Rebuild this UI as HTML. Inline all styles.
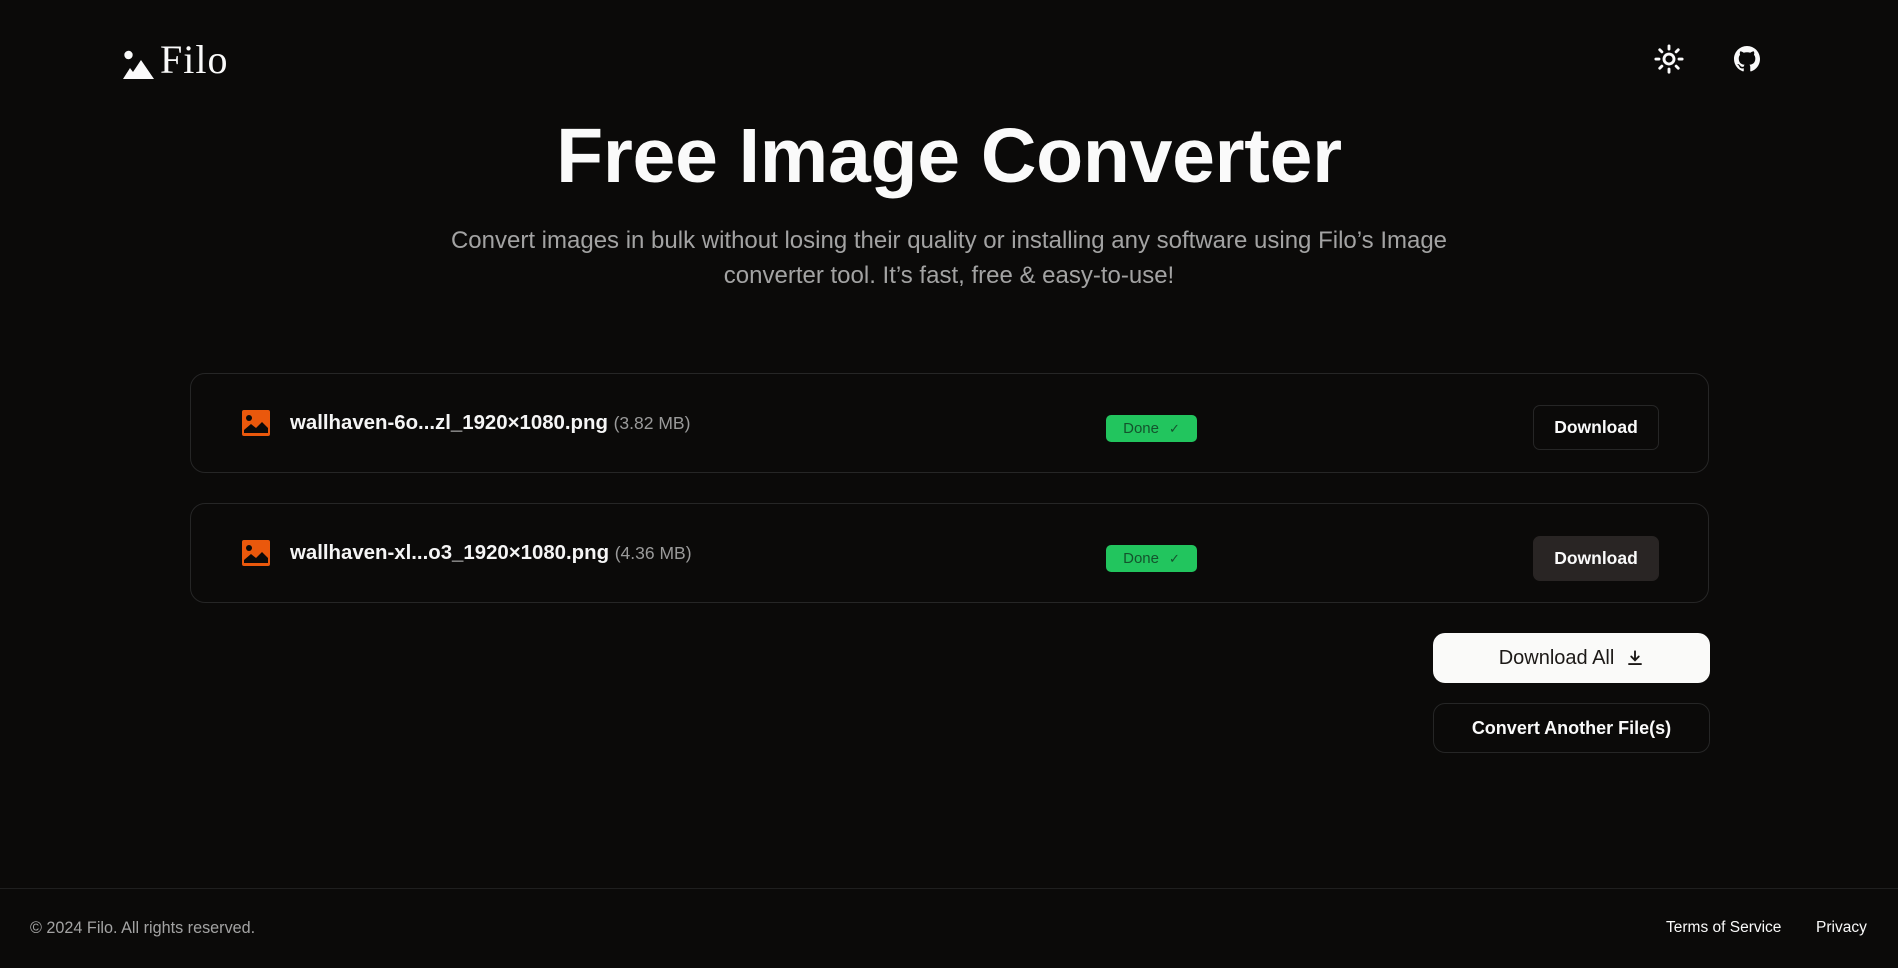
<!DOCTYPE html>
<html><head><meta charset="utf-8"><style>
*{box-sizing:border-box;margin:0;padding:0}
body{width:1898px;height:968px;background:#0b0a09;color:#fafafa;font-family:"Liberation Sans",sans-serif;position:relative;overflow:hidden}
.abs{position:absolute}
.logo{left:123px;top:40px;display:flex;align-items:flex-end}
.logo span{font-family:"Liberation Serif",serif;font-size:40px;line-height:40px;margin-left:6px;color:#fafafa;letter-spacing:1px}
h1{position:absolute;top:112px;left:0;width:1898px;text-align:center;font-size:77px;font-weight:700;letter-spacing:-0.3px}
.sub{top:223px;left:0;width:1898px;text-align:center;font-size:24px;line-height:35px;color:#a3a3a3}
.card{left:190px;width:1519px;height:100px;border:1px solid #262626;border-radius:15px}
.fi{left:241px;width:30px;height:28px}
.fn{left:290px;font-size:20.4px;font-weight:700;color:#f5f5f5}
.fn small{font-weight:400;color:#9a9a9a;font-size:17.5px}
.badge{left:1106px;width:91px;height:27px;background:#22c55e;border-radius:5px;color:#14532d;font-size:15px;display:flex;align-items:center;justify-content:center;gap:10px}
.dl{left:1533px;width:126px;height:45px;border:1px solid #262626;border-radius:7px;font-size:17.5px;font-weight:700;display:flex;align-items:center;justify-content:center}
.big{left:1433px;width:277px;height:50px;border-radius:12px;font-size:20px;display:flex;align-items:center;justify-content:center;gap:12px}
.foot{top:888px;left:0;width:1898px;border-top:1px solid #1f1f1f}
.ft{top:919px;font-size:15.5px}
</style></head><body>
<div class="abs logo">
<svg width="31" height="30" viewBox="0 0 31 30"><circle cx="5.5" cy="5" r="4.2" fill="#fafafa"/><path d="M0 29 L7 18 L10 22 L18 10 L31 29 Z" fill="#fafafa"/></svg>
<span>Filo</span></div>
<svg class="abs" style="left:1654px;top:44px" width="30" height="30" viewBox="0 0 24 24" fill="none" stroke="#fafafa" stroke-width="2.3" stroke-linecap="round"><circle cx="12" cy="12" r="4"/><path d="M12 1.5v2.5M12 20v2.5M4.6 4.6l1.7 1.7M17.7 17.7l1.7 1.7M1.5 12h2.5M20 12h2.5M4.6 19.4l1.7-1.7M17.7 6.3l1.7-1.7"/></svg>
<svg class="abs" style="left:1734px;top:46px" width="26" height="26" viewBox="0 0 16 16"><path fill="#fafafa" d="M8 0C3.58 0 0 3.58 0 8c0 3.540 2.29 6.53 5.47 7.59.4.07.55-.17.55-.38 0-.19-.01-.82-.01-1.49-2.01.37-2.53-.49-2.69-.94-.09-.23-.48-.94-.82-1.130-.28-.15-.68-.52-.01-.53.63-.01 1.08.58 1.23.82.72 1.21 1.87.87 2.33.66.07-.52.28-.87.51-1.07-1.78-.2-3.64-.89-3.64-3.95 0-.87.31-1.59.82-2.15-.08-.2-.36-1.02.08-2.12 0 0 .67-.21 2.2.82.64-.18 1.32-.27 2-.27.68 0 1.36.09 2 .27 1.53-1.04 2.2-.82 2.2-.82.44 1.1.16 1.92.08 2.12.51.56.82 1.27.82 2.15 0 3.07-1.870 3.75-3.65 3.95.29.25.54.73.54 1.48 0 1.07-.01 1.93-.01 2.2 0 .21.15.46.55.38A8.013 8.013 0 0016 8c0-4.42-3.58-8-8-8z"/></svg>
<h1>Free Image Converter</h1>
<div class="abs sub">Convert images in bulk without losing their quality or installing any software using Filo’s Image<br>converter tool. It’s fast, free &amp; easy-to-use!</div>

<div class="abs card" style="top:373px"></div>
<svg class="abs fi" style="top:409px" viewBox="0 0 30 28"><rect x="1" y="1" width="28" height="26" rx="2" fill="#ea580c"/><circle cx="8" cy="9" r="3" fill="#0b0a09"/><path d="M3 24 L3 21 L10 15 L15 19 L21 13 L27 19 L27 24 Z" fill="#0b0a09"/></svg>
<div class="abs fn" style="top:412px">wallhaven-6o...zl_1920×1080.png <small>(3.82 MB)</small></div>
<div class="abs badge" style="top:415px">Done <span style="font-size:13px">✓</span></div>
<div class="abs dl" style="top:405px">Download</div>

<div class="abs card" style="top:503px"></div>
<svg class="abs fi" style="top:539px" viewBox="0 0 30 28"><rect x="1" y="1" width="28" height="26" rx="2" fill="#ea580c"/><circle cx="8" cy="9" r="3" fill="#0b0a09"/><path d="M3 24 L3 21 L10 15 L15 19 L21 13 L27 19 L27 24 Z" fill="#0b0a09"/></svg>
<div class="abs fn" style="top:542px">wallhaven-xl...o3_1920×1080.png <small>(4.36 MB)</small></div>
<div class="abs badge" style="top:545px">Done <span style="font-size:13px">✓</span></div>
<div class="abs dl" style="top:536px;background:#292524;border-color:#292524">Download</div>

<div class="abs big" style="top:633px;background:#fafaf9;color:#1c1917">Download All
<svg width="18" height="18" viewBox="0 0 24 24" fill="none" stroke="#1c1917" stroke-width="2.5" stroke-linecap="round"><path d="M12 3v12M7 10l5 5 5-5M4 20h16"/></svg></div>
<div class="abs big" style="top:703px;border:1px solid #262626;font-size:18px;font-weight:700">Convert Another File(s)</div>

<div class="abs foot"></div>
<div class="abs ft" style="left:30px;color:#a3a3a3;font-size:16.2px">© 2024 Filo. All rights reserved.</div>
<div class="abs ft" style="left:1666px">Terms of Service</div>
<div class="abs ft" style="left:1816px">Privacy</div>
</body></html>
